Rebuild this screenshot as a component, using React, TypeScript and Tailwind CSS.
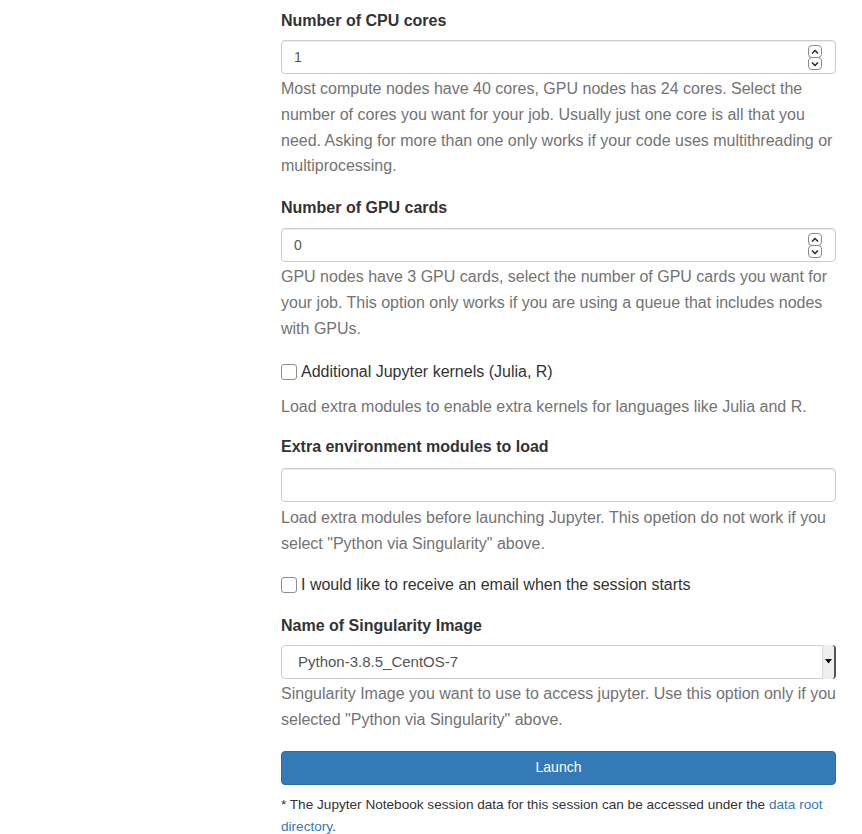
import React from "react";

function Spinner() {
  return (
    <div className="absolute right-[13px] top-[4px] flex flex-col">
      {["up", "down"].map((d) => (
        <div
          key={d}
          className="w-[14px] h-[13px] -mb-[1px] rounded-[4px] border border-[#8a8a8a] bg-white flex items-center justify-center"
        >
          <svg width="8" height="6" viewBox="0 0 8 6">
            <path
              d={d === "up" ? "M1 4.5 L4 1.5 L7 4.5" : "M1 1.5 L4 4.5 L7 1.5"}
              fill="none"
              stroke="#222"
              strokeWidth="1.4"
            />
          </svg>
        </div>
      ))}
    </div>
  );
}

function NumInput({ value }: { value: string }) {
  return (
    <div className="relative h-[34px] rounded-[4px] border border-[#ccc] bg-white shadow-[inset_0_1px_1px_rgba(0,0,0,0.075)] flex items-center pl-[12px] text-[14px] text-[#555]">
      {value}
      <Spinner />
    </div>
  );
}

function Help({ children, className = "" }: { children: React.ReactNode; className?: string }) {
  return <p className={`text-[16px] leading-[25.8px] text-[#737373] ${className}`}>{children}</p>;
}

function Label({ children }: { children: React.ReactNode }) {
  return <div className="text-[16px] leading-[26px] font-bold text-[#333]">{children}</div>;
}

function Check({ children }: { children: React.ReactNode }) {
  return (
    <div className="flex items-center h-[26px] text-[16px] text-[#333]">
      <span className="w-[16px] h-[16px] rounded-[3px] border border-[#8f8f8f] bg-white mr-[4px]" />
      {children}
    </div>
  );
}

export default function App() {
  return (
    <div
      className="w-[862px] h-[834px] bg-white flex overflow-hidden"
      style={{ fontFamily: '"Liberation Sans", Arial, sans-serif' }}
    >
      <div className="w-[281px] shrink-0" />
      <div className="w-[555px] shrink-0 pt-[8px]">
        {/* CPU */}
        <Label>Number of CPU cores</Label>
        <div className="mt-[6px]">
          <NumInput value="1" />
        </div>
        <Help className="mt-[2px]">
          Most compute nodes have 40 cores, GPU nodes has 24 cores. Select the number of cores you want for your job.
          Usually just one core is all that you need. Asking for more than one only works if your code uses
          multithreading or multiprocessing.
        </Help>

        {/* GPU */}
        <div className="mt-[16px]">
          <Label>Number of GPU cards</Label>
        </div>
        <div className="mt-[7px]">
          <NumInput value="0" />
        </div>
        <Help className="mt-[2px]">
          GPU nodes have 3 GPU cards, select the number of GPU cards you want for your job. This option only works if
          you are using a queue that includes nodes with GPUs.
        </Help>

        <div className="mt-[17px]">
          <Check>Additional Jupyter kernels (Julia, R)</Check>
        </div>
        <Help className="mt-[9px]">Load extra modules to enable extra kernels for languages like Julia and R.</Help>

        <div className="mt-[15px]">
          <Label>Extra environment modules to load</Label>
        </div>
        <div className="mt-[8px] h-[34px] rounded-[4px] border border-[#ccc] bg-white shadow-[inset_0_1px_1px_rgba(0,0,0,0.075)]" />
        <Help className="mt-[3px]">
          Load extra modules before launching Jupyter. This opetion do not work if you select "Python via Singularity"
          above.
        </Help>

        <div className="mt-[15px]">
          <Check>I would like to receive an email when the session starts</Check>
        </div>

        <div className="mt-[15px]">
          <Label>Name of Singularity Image</Label>
        </div>
        <div className="mt-[6px] h-[34px] rounded-[4px] border border-[#ccc] bg-white flex items-center pl-[16px] text-[15px] text-[#555] relative">
          Python-3.8.5_CentOS-7
          <div className="absolute right-[-1px] top-[-1px] bottom-[-1px] w-[14px] bg-[#efefef] border-l border-[#d8d8d8] border-r-2 border-r-[#555] rounded-r-[4px] flex items-center justify-center">
            <svg width="7" height="5" viewBox="0 0 7 5">
              <path d="M0 0 L7 0 L3.5 4.5 Z" fill="#111" />
            </svg>
          </div>
        </div>
        <Help className="mt-[2px]">
          Singularity Image you want to use to access jupyter. Use this option only if you selected "Python via
          Singularity" above.
        </Help>

        <button className="mt-[18px] w-full h-[34px] rounded-[4px] bg-[#337ab7] border border-[#2e6da4] text-white text-[14px] flex items-center justify-center">
          Launch
        </button>
        <p className="mt-[9px] text-[13.6px] leading-[22px] text-[#333]">
          * The Jupyter Notebook session data for this session can be accessed under the{" "}
          <a className="text-[#337ab7]">data root directory</a>.
        </p>
      </div>
    </div>
  );
}
